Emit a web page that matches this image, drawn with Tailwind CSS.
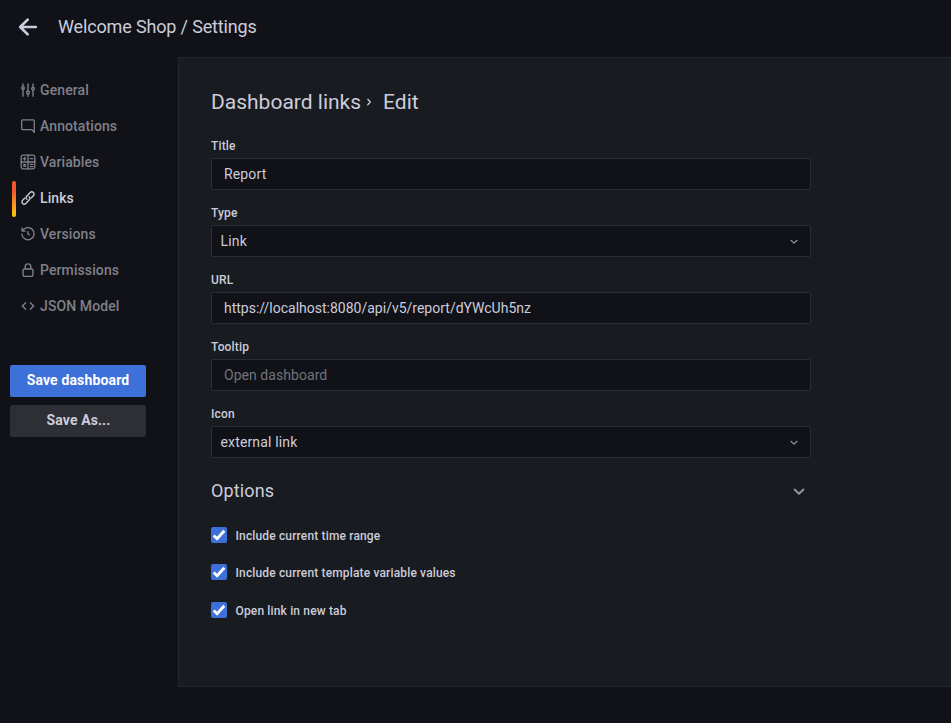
<!DOCTYPE html>
<html lang="en">
<head>
<meta charset="utf-8">
<title>Welcome Shop / Settings</title>
<script src="https://cdn.jsdelivr.net/npm/@tailwindcss/browser@4"></script>
</head>
<body class="w-[951px] h-[723px] overflow-hidden bg-[#111217] text-[#ccccdc] font-['Roboto',sans-serif] text-sm tracking-[0.15px] flex flex-col">
<header class="h-[57px] shrink-0 flex items-center pl-[18px] pb-[3px]">
  <svg class="w-[20px] h-[20px]" viewBox="0 0 20 20" fill="none" stroke="currentColor" stroke-width="2.7" stroke-linecap="round" stroke-linejoin="round"><path d="M17.8 10H2.5M9.7 2.6 2.2 10l7.5 7.4"/></svg>
  <h1 class="ml-5 text-lg leading-[22px] tracking-[-0.15px]">Welcome Shop / Settings</h1>
</header>
<div class="flex flex-1 min-h-0">
  <aside class="w-[178px] shrink-0 pt-[15px]">
    <nav class="font-medium text-[#7f808a] tracking-[0.1px]">
      <a class="flex items-center h-9 pl-[21px] gap-[5px]">
        <svg class="w-[14px] h-[14px]" viewBox="0 0 14 14" fill="none" stroke="currentColor" stroke-width="1.35" stroke-linecap="round"><path d="M2 .8v2.6M2 6.2v7M7 .8v7M7 11v2.2M12 .8v3.4M12 7.2v6"/><circle cx="2" cy="4.9" r="1.3"/><circle cx="7" cy="9.4" r="1.4"/><circle cx="12" cy="5.8" r="1.3"/></svg>General</a>
      <a class="flex items-center h-9 pl-[21px] gap-[5px]">
        <svg class="w-[14px] h-[14px]" viewBox="0 0 14 14" fill="none" stroke="currentColor" stroke-width="1.3" stroke-linejoin="round"><path d="M13.3 13.2V2a1.1 1.1 0 0 0-1.1-1.1H1.8A1.1 1.1 0 0 0 .7 2v7.6a1.1 1.1 0 0 0 1.1 1.1h9z"/></svg>Annotations</a>
      <a class="flex items-center h-9 pl-[20px] gap-[4px]">
        <svg class="w-[16px] h-[16px]" viewBox="0 0 16 16" fill="none" stroke="currentColor" stroke-width="1.3" stroke-linecap="round"><rect x="1.2" y="1.2" width="13.6" height="13.6" rx="1.8"/><path d="M8 1v14M1 8h14M3.3 4.7h2.6M4.6 3.4V6M10.2 4.7h2.6M10.2 10.4h2.6M10.2 12.6h2.6M3.7 10.5l1.9 1.9M5.6 10.5l-1.9 1.9"/></svg>Variables</a>
      <a class="relative flex items-center h-9 pl-[21px] gap-[5px] text-[#ccccdc]">
        <span class="absolute left-[12px] top-px w-1 h-9 rounded-[2px] bg-linear-to-b from-[#f05a28] from-30% to-[#fbca0a]"></span>
        <svg class="w-[14px] h-[14px]" viewBox="0 0 14 14" fill="none" stroke="currentColor" stroke-width="1.35" stroke-linecap="round" stroke-linejoin="round"><path d="M5.9 8.3C4.8 7.2 4.9 5.9 5.9 4.9L9.2 1.6a2.2 2.2 0 0 1 3.2 3.2L10.4 6.8M8.1 5.7C9.2 6.8 9.1 8.1 8.1 9.1L4.8 12.4a2.2 2.2 0 0 1-3.2-3.2L3.6 7.2"/></svg>Links</a>
      <a class="flex items-center h-9 pl-[21px] gap-[5px]">
        <svg class="w-[14px] h-[14px]" viewBox="0 0 14 14" fill="none" stroke="currentColor" stroke-width="1.35" stroke-linecap="round" stroke-linejoin="round"><path d="M1 1v3.1h3.1M1.5 4A6.1 6.1 0 1 1 .9 7.2M7 4.6V7l1.3.8"/></svg>Versions</a>
      <a class="flex items-center h-9 pl-[21px] gap-[5px]">
        <svg class="w-[14px] h-[14px]" viewBox="0 0 14 14" fill="none" stroke="currentColor" stroke-width="1.35"><rect x="2" y="6" width="10" height="7.3" rx="1.5"/><path d="M4.2 6V3.6a2.8 2.8 0 0 1 5.6 0V6"/></svg>Permissions</a>
      <a class="flex items-center h-9 pl-[21px] gap-[5px]">
        <svg class="w-[14px] h-[14px]" viewBox="0 0 14 14" fill="none" stroke="currentColor" stroke-width="1.4" stroke-linecap="round" stroke-linejoin="round"><path d="M4.6 3.8 1.4 7l3.2 3.2M9.4 3.8 12.6 7l-3.2 3.2"/></svg>JSON Model</a>
    </nav>
    <div class="mt-[41px] ml-[10px] w-[136px] flex flex-col gap-2">
      <button class="h-8 pb-[2px] rounded-[2px] bg-[#3d71d9] text-white font-bold tracking-[0.15px]">Save dashboard</button>
      <button class="h-8 pb-[2px] pl-px rounded-[2px] bg-[#2e2f34] font-bold tracking-[0.1px]">Save As...</button>
    </div>
  </aside>
  <main class="flex-1 h-[630px] border border-r-0 border-[#24272b] rounded-l-[2px] bg-[#181b1f] pl-8 pt-8">
    <h2 class="flex items-center h-6 text-[21px] leading-6 tracking-normal">Dashboard links
      <svg class="w-4 h-4" viewBox="0 0 16 16" fill="none" stroke="currentColor" stroke-width="1.3" stroke-linecap="round" stroke-linejoin="round"><path d="m6.8 5.3 2.5 2.7-2.5 2.7"/></svg>
      <span class="ml-[6px]">Edit</span></h2>
    <form class="w-[600px] mt-[24px]">
      <div class="h-[67px]"><label class="block h-5 pt-px leading-[15px] text-xs font-medium">Title</label><div class="h-8 border border-[#2c2d32] rounded-[2px] bg-[#111217] px-3 leading-[30px]">Report</div></div>
      <div class="h-[67px]"><label class="block h-5 pt-px leading-[15px] text-xs font-medium">Type</label><div class="h-8 border border-[#2c2d32] rounded-[2px] bg-[#111217] pl-[8.5px] pr-2 flex items-center justify-between">Link<svg class="w-4 h-4 text-[#92939e]" viewBox="0 0 16 16" fill="none" stroke="currentColor" stroke-width="1.2" stroke-linecap="round" stroke-linejoin="round"><path d="m5 7.3 3 2.8 3-2.8"/></svg></div></div>
      <div class="h-[67px]"><label class="block h-5 pt-px leading-[15px] text-xs font-medium">URL</label><div class="h-8 border border-[#2c2d32] rounded-[2px] bg-[#111217] px-3 leading-[30px] tracking-normal">https://localhost:8080/api/v5/report/dYWcUh5nz</div></div>
      <div class="h-[67px]"><label class="block h-5 pt-px leading-[15px] text-xs font-medium">Tooltip</label><div class="h-8 border border-[#2c2d32] rounded-[2px] bg-[#111217] px-3 leading-[30px] text-[#72737c] tracking-[0.05px]">Open dashboard</div></div>
      <div class="h-[67px]"><label class="block h-5 pt-px leading-[15px] text-xs font-medium">Icon</label><div class="h-8 border border-[#2c2d32] rounded-[2px] bg-[#111217] pl-[8.5px] pr-2 flex items-center justify-between">external link<svg class="w-4 h-4 text-[#92939e]" viewBox="0 0 16 16" fill="none" stroke="currentColor" stroke-width="1.2" stroke-linecap="round" stroke-linejoin="round"><path d="m5 7.3 3 2.8 3-2.8"/></svg></div></div>
      <div class="flex items-center justify-between h-[22px] mt-[7px] pr-1 text-lg leading-[22px] tracking-[0.15px]">Options<svg class="w-4 h-4 text-[#92939e]" viewBox="0 0 16 16" fill="none" stroke="currentColor" stroke-width="2" stroke-linecap="round" stroke-linejoin="round"><path d="m3.6 6.5 4.4 4.2 4.4-4.2"/></svg></div>
      <div class="mt-[25px] flex flex-col text-xs leading-4 font-medium">
        <label class="flex items-center gap-[8.5px] h-4"><span class="w-4 h-4 rounded-[2px] bg-[#3d71d9]"><svg class="w-4 h-4" viewBox="0 0 16 16" fill="none" stroke="#fff" stroke-width="2.8"><path d="m2.7 8.5 3.4 3.2 7.2-8"/></svg></span><span class="mt-[2px]">Include current time range</span></label>
        <label class="mt-[21px] flex items-center gap-[8.5px] h-4"><span class="w-4 h-4 rounded-[2px] bg-[#3d71d9]"><svg class="w-4 h-4" viewBox="0 0 16 16" fill="none" stroke="#fff" stroke-width="2.8"><path d="m2.7 8.5 3.4 3.2 7.2-8"/></svg></span><span class="mt-[2px]">Include current template variable values</span></label>
        <label class="mt-[22px] flex items-center gap-[8.5px] h-4"><span class="w-4 h-4 rounded-[2px] bg-[#3d71d9]"><svg class="w-4 h-4" viewBox="0 0 16 16" fill="none" stroke="#fff" stroke-width="2.8"><path d="m2.7 8.5 3.4 3.2 7.2-8"/></svg></span><span class="mt-[2px]">Open link in new tab</span></label>
      </div>
    </form>
  </main>
</div>
</body>
</html>
